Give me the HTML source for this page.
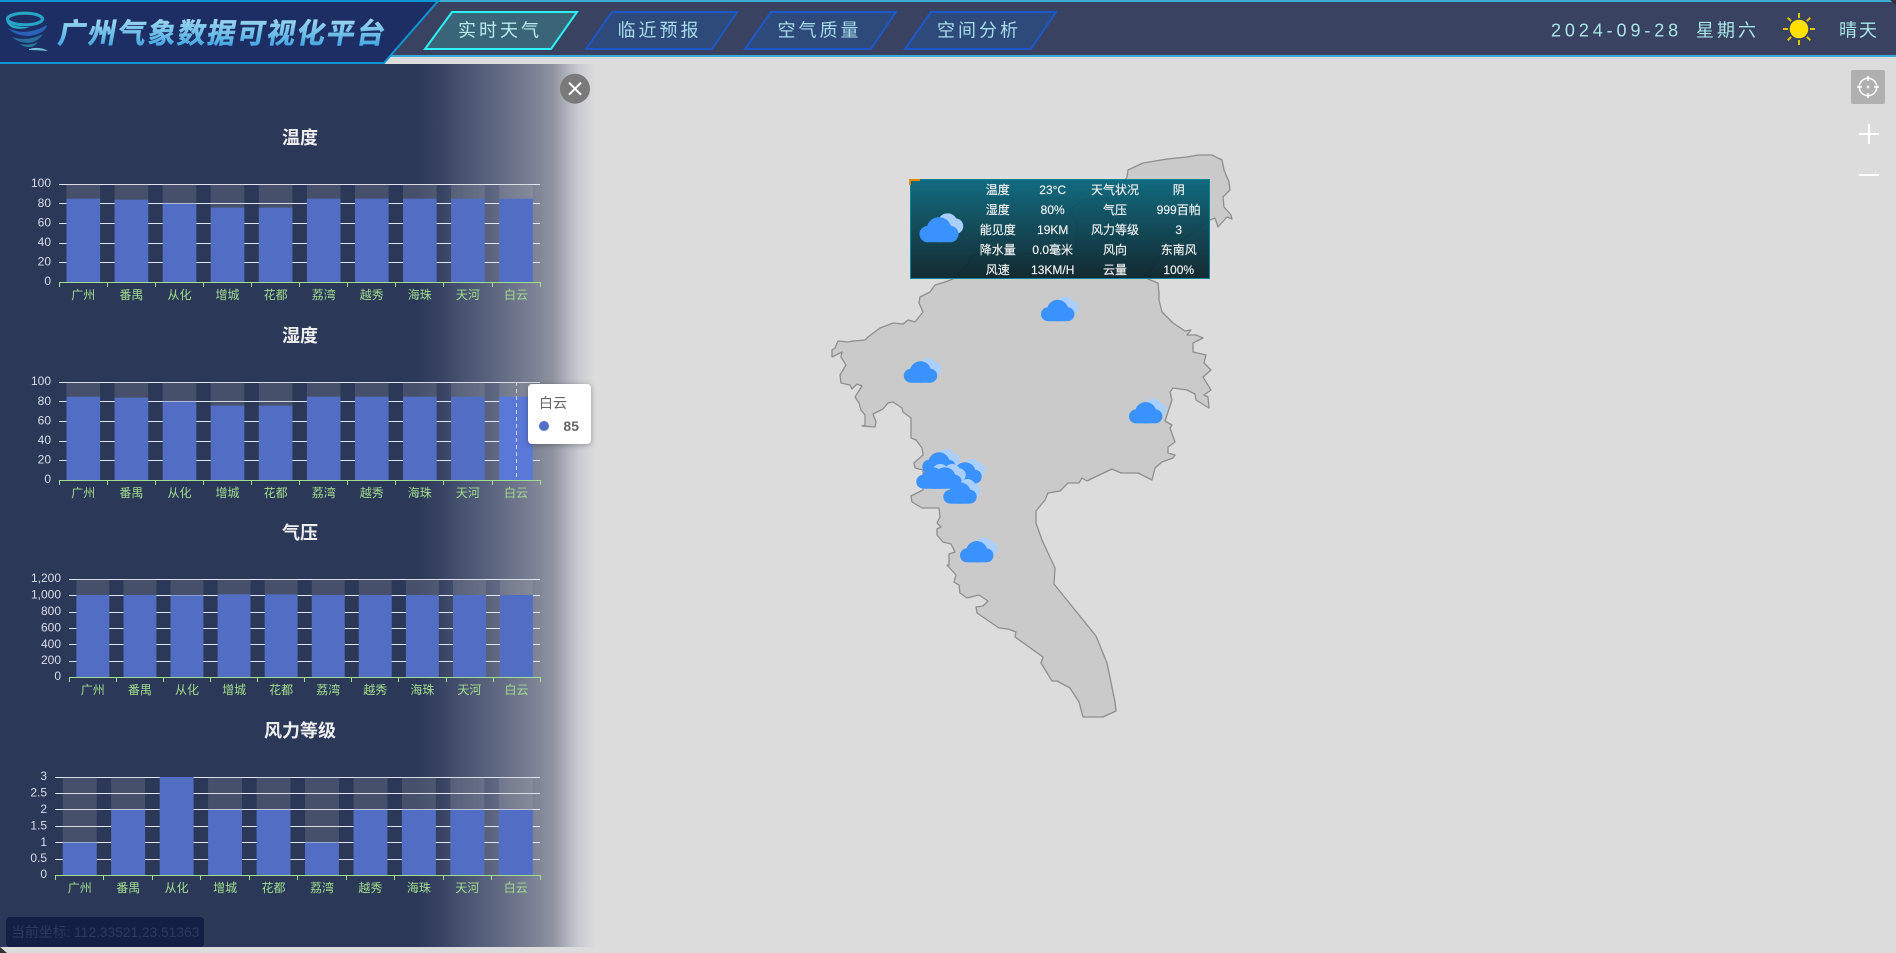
<!DOCTYPE html>
<html lang="zh">
<head>
<meta charset="utf-8">
<title>广州气象数据可视化平台</title>
<style>
html,body{margin:0;padding:0;width:1896px;height:953px;overflow:hidden;background:#dcdcdc;}
body{position:relative;font-family:"Liberation Sans","Noto Sans CJK SC",sans-serif;}
svg.main{position:absolute;left:0;top:0;font-family:"Liberation Sans","Noto Sans CJK SC",sans-serif;}
.tip{position:absolute;left:528px;top:384px;width:63px;height:60px;background:#fff;border-radius:4px;box-shadow:0 1px 6px rgba(0,0,0,.3);color:#666;font-size:14px;}
.tip .n{position:absolute;left:11px;top:9px;line-height:20px;}
.tip .d{position:absolute;left:11px;top:37px;width:10px;height:10px;border-radius:50%;background:#5470c6;}
.tip .v{position:absolute;right:12px;top:32px;line-height:20px;font-weight:700;}
.coord{position:absolute;left:6px;top:917px;width:198px;height:30px;background:#141f45;border-radius:4px;color:#2e3a5c;font-size:14px;line-height:30px;padding-left:5px;box-sizing:border-box;white-space:nowrap;letter-spacing:-.12px;}
</style>
</head>
<body>
<svg class="main" width="1896" height="953" viewBox="0 0 1896 953">
<defs>
<linearGradient id="pg" gradientUnits="userSpaceOnUse" x1="0" y1="0" x2="600" y2="0">
<stop offset="0" stop-color="#2b3858"/><stop offset=".695" stop-color="#2b3858"/>
<stop offset=".733" stop-color="#384363"/><stop offset=".778" stop-color="#4a5572"/>
<stop offset=".833" stop-color="#616983"/><stop offset=".888" stop-color="#7b8194"/>
<stop offset=".922" stop-color="#90949f"/><stop offset=".945" stop-color="#b0b3bd"/>
<stop offset=".967" stop-color="#cccdd2"/><stop offset=".993" stop-color="#dcdcdc"/>
</linearGradient>
<linearGradient id="pop" x1="0" y1="0" x2="0" y2="1">
<stop offset="0" stop-color="#07657b" stop-opacity=".95"/><stop offset="1" stop-color="#0a2128" stop-opacity=".95"/>
</linearGradient>
<linearGradient id="tt" x1="0" y1="0" x2="0" y2="1">
<stop offset="0" stop-color="#b4e2f4"/><stop offset=".55" stop-color="#6fbfe8"/><stop offset="1" stop-color="#2f9ae0"/>
</linearGradient>
<symbol id="cloud" overflow="visible" viewBox="-20 -20 40 40" width="40" height="40">
<circle cx="7.3" cy="-5.7" r="8.3" fill="#a9cfff"/><circle cx="14" cy="-3" r="6.7" fill="#a9cfff"/>
<circle cx="0" cy="0" r="10.7" fill="#3a92ff"/><rect x="-16.7" y="-3.3" width="33.4" height="14" rx="7" fill="#3a92ff"/>
</symbol>
</defs>

<!-- map -->
<path fill="#cacaca" stroke="#8e8e8e" stroke-width="1.3" stroke-linejoin="round" d="M1127 177 L1128 170 1143 163 1167 159 1187 157 1198 155 1212 155 1222 160 1224 170 1229 182 1230 190 1223 197 1224 207 1231 215 1232 219 1227 217 1218 227 1215 218 1210 220 1187 237 1165 250 1150 272 1148 279 1158 283 1159 293 1159 300 1162 312 1173 323 1185 331 1191 330 1187 335 1196 335 1203 338 1193 343 1193 352 1206 355 1204 363 1211 370 1203 377 1211 390 1204 395 1208 397 1209 408 1196 400 1195 394 1187 390 1173 388 1170 392 1172 400 1165 421 1172 425 1170 428 1175 442 1168 447 1168 453 1175 455 1173 458 1162 462 1155 468 1152 480 1138 473 1121 473 1112 469 1093 478 1087 481 1082 478 1079 483 1068 483 1060 491 1048 493 1045 500 1036 511 1036 523 1042 540 1055 568 1054 584 1096 636 1107 663 1115 702 1116 711 1103 717 1083 717 1079 702 1070 688 1057 681 1052 681 1041 663 1043 657 1015 637 1016 632 1008 629 999 628 977 613 976 607 983 606 988 601 979 595 967 598 960 593 959 585 954 582 956 575 947 565 949 565 949 554 955 552 951 544 943 542 937 535 937 529 941 527 937 523 940 517 939 508 922 508 912 502 911 496 923 490 923 470 915 468 914 463 923 455 922 448 916 440 911 438 911 418 903 412 902 408 893 402 888 403 883 409 873 414 876 422 875 427 862 426 865 425 865 415 861 410 859 403 855 397 862 386 857 384 852 389 850 385 841 383 840 375 846 365 841 357 842 352 832 357 832 350 835 348 838 341 848 342 853 341 865 340 868 337 880 328 888 325 893 323 903 324 908 320 915 322 923 312 919 303 920 297 930 292 935 285 945 282 953 279 965 268 972 255 1000 252 1040 254 1075 255 1077 225 1070 210 1083 200 1113 197 1127 177 Z"/>

<!-- clouds -->
<use href="#cloud" x="1037.7" y="290.5"/>
<use href="#cloud" x="900.5" y="352"/>
<use href="#cloud" x="1125.7" y="392.7"/>
<use href="#cloud" x="956.7" y="531.7"/>
<use href="#cloud" x="919" y="443"/>
<use href="#cloud" x="945" y="453"/>
<use href="#cloud" x="913" y="458"/>
<use href="#cloud" x="925" y="458"/>
<use href="#cloud" x="940" y="473"/>

<!-- popup -->
<rect x="910.5" y="179.5" width="299" height="99" fill="url(#pop)" stroke="#0e8499"/>
<path d="M910 185V180H920" fill="none" stroke="#e08a00" stroke-width="2"/>
<g transform="translate(939 229.7) scale(1.17) translate(-20 -20)"><use href="#cloud" x="0" y="0"/></g>
<g font-size="12" fill="#f2f2f2" stroke="#f2f2f2" stroke-width=".15" text-anchor="middle">
<text x="997.7" y="194">温度</text><text x="1052.7" y="194">23°C</text><text x="1115" y="194">天气状况</text><text x="1178.7" y="194">阴</text>
<text x="997.7" y="214">湿度</text><text x="1052.7" y="214">80%</text><text x="1115" y="214">气压</text><text x="1178.7" y="214">999百帕</text>
<text x="997.7" y="234">能见度</text><text x="1052.7" y="234">19KM</text><text x="1115" y="234">风力等级</text><text x="1178.7" y="234">3</text>
<text x="997.7" y="254">降水量</text><text x="1052.7" y="254">0.0毫米</text><text x="1115" y="254">风向</text><text x="1178.7" y="254">东南风</text>
<text x="997.7" y="274">风速</text><text x="1052.7" y="274">13KM/H</text><text x="1115" y="274">云量</text><text x="1178.7" y="274">100%</text>
</g>

<!-- map controls -->
<rect x="1851" y="70" width="34" height="34" rx="2" fill="#b0b0b0"/>
<g fill="none" stroke="#fff" stroke-width="1.5">
<circle cx="1868" cy="87" r="8.7"/>
<path d="M1868 76v5M1868 93v5M1857 87h5M1874 87h5"/>
<path d="M1866.5 87h3M1868 85.5v3" stroke-width="1"/>
</g>
<path d="M1869 124v20M1859 134h20M1859 175h20" stroke="#fff" stroke-width="2" fill="none"/>

<!-- panel -->
<rect x="0" y="64" width="600" height="883" fill="url(#pg)"/>
<circle cx="575" cy="88.7" r="15" fill="#7a7a7a"/>
<path d="M569 82.7l12 12M581 82.7l-12 12" stroke="#fff" stroke-width="2" fill="none"/>

<!-- header -->
<rect x="0" y="0" width="1896" height="57" fill="#394260"/>
<rect x="0" y="0" width="1896" height="2" fill="#3aacd6"/>
<rect x="0" y="55" width="1896" height="2" fill="#3aacd6"/>
<path d="M-3 1H438L384 63H-3Z" fill="#1d2e64" stroke="#0e95d4" stroke-width="2"/>
<rect x="0" y="0" width="440" height="1.5" fill="#0e95d4"/>

<!-- logo -->
<ellipse cx="25" cy="19" rx="17.5" ry="5.8" fill="none" stroke="#27a4c4" stroke-width="3.2"/>
<path d="M6 20Q12 28 30 27Q22 30 13 28Q7 25 6 20Z" fill="#27b0c8"/>
<path d="M8 28Q26 37 47 25Q46 33 30 36Q15 36 8 28Z" fill="#2a62b8"/>
<path d="M12 37Q28 42 43 34Q38 42 28 43Q17 42 12 37Z" fill="#2b6f9c"/>
<path d="M20 44Q30 46 38 42Q34 48 27 47Q22 46 20 44Z" fill="#2b7a98"/>
<path d="M29 49Q40 46 48 51Q38 50 29 50Z" fill="#6fc0d8"/>

<!-- title -->
<text transform="translate(57 43) skewX(-10)" font-size="28" font-weight="700" letter-spacing="1.85" fill="url(#tt)" stroke="url(#tt)" stroke-width=".5" font-family="'Noto Sans CJK SC',sans-serif">广州气象数据可视化平台</text>

<!-- tabs -->
<path d="M452 12H577L551 49H425Z" fill="#3a6478" stroke="#2ef0f2" stroke-width="2"/>
<path d="M612 12H737L712 49H586Z" fill="#2e4a7a" stroke="#1c58c8" stroke-width="2"/>
<path d="M771 12H896L871 49H745Z" fill="#2e4a7a" stroke="#1c58c8" stroke-width="2"/>
<path d="M931 12H1056L1031 49H905Z" fill="#2e4a7a" stroke="#1c58c8" stroke-width="2"/>
<g font-size="18" letter-spacing="3" text-anchor="middle" font-family="'Noto Sans CJK SC',sans-serif">
<text x="500" y="36.5" fill="#b8ecec">实时天气</text>
<text x="659.5" y="36.5" fill="#a8dcea">临近预报</text>
<text x="819.5" y="36.5" fill="#a8dcea">空气质量</text>
<text x="979" y="36.5" fill="#a8dcea">空间分析</text>
</g>

<!-- date / weather -->
<text x="1551" y="36.5" font-size="18" letter-spacing="3.9" fill="#a8e6e8">2024-09-28</text>
<text x="1696" y="36.5" font-size="18" letter-spacing="3" fill="#a8e6e8">星期六</text>
<circle cx="1799" cy="29" r="9.3" fill="#ffe000"/>
<path d="M1799 13v5M1799 40v5M1783 29h5M1810 29h5M1787.7 17.7l3.5 3.5M1806.8 36.8l3.5 3.5M1810.3 17.7l-3.5 3.5M1791.2 36.8l-3.5 3.5" stroke="#e2c400" stroke-width="2" fill="none"/>
<text x="1839" y="36.5" font-size="18" letter-spacing="2" fill="#a8e6e8">晴天</text>

<!-- corners -->
<path d="M0 947L7 953H0Z" fill="#333"/>
<path d="M1890 0H1896V5Z" fill="#333"/>

<!-- chart 1 -->
<g transform="translate(0 184)">
<text x="300" y="-40" font-size="18" font-weight="700" fill="#eeeeee" text-anchor="middle">温度</text>
<g stroke="#e0e6f1" shape-rendering="crispEdges"><path d="M59 0.5H540M59 19.5H540M59 39.5H540M59 59.5H540M59 78.5H540"/></g>
<g fill="#b4b4b4" fill-opacity=".2"><rect x="66.5" y="0" width="33.6" height="98"/><rect x="114.6" y="0" width="33.6" height="98"/><rect x="162.7" y="0" width="33.6" height="98"/><rect x="210.7" y="0" width="33.6" height="98"/><rect x="258.8" y="0" width="33.6" height="98"/><rect x="306.9" y="0" width="33.6" height="98"/><rect x="355" y="0" width="33.6" height="98"/><rect x="403" y="0" width="33.6" height="98"/><rect x="451.1" y="0" width="33.6" height="98"/><rect x="499.2" y="0" width="33.6" height="98"/></g>
<g fill="#516ec4"><rect x="66.5" y="14.7" width="33.6" height="83.6"/><rect x="114.6" y="15.7" width="33.6" height="82.6"/><rect x="162.7" y="19.7" width="33.6" height="78.6"/><rect x="210.7" y="23.6" width="33.6" height="74.7"/><rect x="258.8" y="23.6" width="33.6" height="74.7"/><rect x="306.9" y="14.7" width="33.6" height="83.6"/><rect x="355" y="14.7" width="33.6" height="83.6"/><rect x="403" y="14.7" width="33.6" height="83.6"/><rect x="451.1" y="14.7" width="33.6" height="83.6"/><rect x="499.2" y="14.7" width="33.6" height="83.6"/></g>
<path d="M59 98.5H540M59.5 98v5M107.5 98v5M155.5 98v5M203.5 98v5M251.5 98v5M299.5 98v5M347.5 98v5M395.5 98v5M443.5 98v5M492.5 98v5M540.5 98v5" stroke="#a2dc8e" fill="none" shape-rendering="crispEdges"/>
<g font-size="12" fill="#d8dde8" text-anchor="end"><text x="51" y="3">100</text><text x="51" y="23">80</text><text x="51" y="42.5">60</text><text x="51" y="62">40</text><text x="51" y="81.5">20</text><text x="51" y="101">0</text></g>
<g font-size="12" fill="#a2dc8e" text-anchor="middle"><text x="83.3" y="115">广州</text><text x="131.4" y="115">番禺</text><text x="179.5" y="115">从化</text><text x="227.5" y="115">增城</text><text x="275.6" y="115">花都</text><text x="323.7" y="115">荔湾</text><text x="371.8" y="115">越秀</text><text x="419.8" y="115">海珠</text><text x="467.9" y="115">天河</text><text x="516" y="115">白云</text></g>
</g>

<!-- chart 2 -->
<g transform="translate(0 382)">
<text x="300" y="-40" font-size="18" font-weight="700" fill="#eeeeee" text-anchor="middle">湿度</text>
<g stroke="#e0e6f1" shape-rendering="crispEdges"><path d="M59 0.5H540M59 19.5H540M59 39.5H540M59 59.5H540M59 78.5H540"/></g>
<g fill="#b4b4b4" fill-opacity=".2"><rect x="66.5" y="0" width="33.6" height="98"/><rect x="114.6" y="0" width="33.6" height="98"/><rect x="162.7" y="0" width="33.6" height="98"/><rect x="210.7" y="0" width="33.6" height="98"/><rect x="258.8" y="0" width="33.6" height="98"/><rect x="306.9" y="0" width="33.6" height="98"/><rect x="355" y="0" width="33.6" height="98"/><rect x="403" y="0" width="33.6" height="98"/><rect x="451.1" y="0" width="33.6" height="98"/><rect x="499.2" y="0" width="33.6" height="98"/></g>
<g fill="#516ec4"><rect x="66.5" y="14.7" width="33.6" height="83.6"/><rect x="114.6" y="15.7" width="33.6" height="82.6"/><rect x="162.7" y="19.7" width="33.6" height="78.6"/><rect x="210.7" y="23.6" width="33.6" height="74.7"/><rect x="258.8" y="23.6" width="33.6" height="74.7"/><rect x="306.9" y="14.7" width="33.6" height="83.6"/><rect x="355" y="14.7" width="33.6" height="83.6"/><rect x="403" y="14.7" width="33.6" height="83.6"/><rect x="451.1" y="14.7" width="33.6" height="83.6"/></g>
<rect x="499.2" y="14.7" width="33.6" height="83.6" fill="#5a78d8"/>
<path d="M516.5 0V98" stroke="#cfd3dc" stroke-dasharray="4 3" fill="none" shape-rendering="crispEdges"/>
<path d="M59 98.5H540M59.5 98v5M107.5 98v5M155.5 98v5M203.5 98v5M251.5 98v5M299.5 98v5M347.5 98v5M395.5 98v5M443.5 98v5M492.5 98v5M540.5 98v5" stroke="#a2dc8e" fill="none" shape-rendering="crispEdges"/>
<g font-size="12" fill="#d8dde8" text-anchor="end"><text x="51" y="3">100</text><text x="51" y="23">80</text><text x="51" y="42.5">60</text><text x="51" y="62">40</text><text x="51" y="81.5">20</text><text x="51" y="101">0</text></g>
<g font-size="12" fill="#a2dc8e" text-anchor="middle"><text x="83.3" y="115">广州</text><text x="131.4" y="115">番禺</text><text x="179.5" y="115">从化</text><text x="227.5" y="115">增城</text><text x="275.6" y="115">花都</text><text x="323.7" y="115">荔湾</text><text x="371.8" y="115">越秀</text><text x="419.8" y="115">海珠</text><text x="467.9" y="115">天河</text><text x="516" y="115">白云</text></g>
</g>

<!-- chart 3 -->
<g transform="translate(0 579)">
<text x="300" y="-40" font-size="18" font-weight="700" fill="#eeeeee" text-anchor="middle">气压</text>
<g stroke="#e0e6f1" shape-rendering="crispEdges"><path d="M69 0.5H540M69 16.5H540M69 33.5H540M69 49.5H540M69 65.5H540M69 82.5H540"/></g>
<g fill="#b4b4b4" fill-opacity=".2"><rect x="76.4" y="0" width="32.9" height="98"/><rect x="123.5" y="0" width="32.9" height="98"/><rect x="170.5" y="0" width="32.9" height="98"/><rect x="217.6" y="0" width="32.9" height="98"/><rect x="264.7" y="0" width="32.9" height="98"/><rect x="311.8" y="0" width="32.9" height="98"/><rect x="358.8" y="0" width="32.9" height="98"/><rect x="405.9" y="0" width="32.9" height="98"/><rect x="453" y="0" width="32.9" height="98"/><rect x="500" y="0" width="32.9" height="98"/></g>
<g fill="#516ec4"><rect x="76.4" y="16" width="32.9" height="82.3"/><rect x="123.5" y="16" width="32.9" height="82.3"/><rect x="170.5" y="16.4" width="32.9" height="81.9"/><rect x="217.6" y="15.3" width="32.9" height="83"/><rect x="264.7" y="15.4" width="32.9" height="82.9"/><rect x="311.8" y="16" width="32.9" height="82.3"/><rect x="358.8" y="16" width="32.9" height="82.3"/><rect x="405.9" y="16" width="32.9" height="82.3"/><rect x="453" y="16" width="32.9" height="82.3"/><rect x="500" y="16" width="32.9" height="82.3"/></g>
<path d="M69 98.5H540M69.5 98v5M116.5 98v5M163.5 98v5M210.5 98v5M257.5 98v5M304.5 98v5M351.5 98v5M398.5 98v5M446.5 98v5M493.5 98v5M540.5 98v5" stroke="#a2dc8e" fill="none" shape-rendering="crispEdges"/>
<g font-size="12" fill="#d8dde8" text-anchor="end"><text x="61" y="3">1,200</text><text x="61" y="19.5">1,000</text><text x="61" y="36">800</text><text x="61" y="52.5">600</text><text x="61" y="69">400</text><text x="61" y="85">200</text><text x="61" y="101">0</text></g>
<g font-size="12" fill="#a2dc8e" text-anchor="middle"><text x="92.8" y="115">广州</text><text x="139.9" y="115">番禺</text><text x="187" y="115">从化</text><text x="234.1" y="115">增城</text><text x="281.1" y="115">花都</text><text x="328.2" y="115">荔湾</text><text x="375.3" y="115">越秀</text><text x="422.4" y="115">海珠</text><text x="469.4" y="115">天河</text><text x="516.5" y="115">白云</text></g>
</g>

<!-- chart 4 -->
<g transform="translate(0 777)">
<text x="300" y="-40" font-size="18" font-weight="700" fill="#eeeeee" text-anchor="middle">风力等级</text>
<g stroke="#e0e6f1" shape-rendering="crispEdges"><path d="M55 0.5H540M55 16.5H540M55 32.5H540M55 49.5H540M55 65.5H540M55 82.5H540"/></g>
<g fill="#b4b4b4" fill-opacity=".2"><rect x="62.8" y="0" width="33.9" height="98"/><rect x="111.2" y="0" width="33.9" height="98"/><rect x="208.1" y="0" width="33.9" height="98"/><rect x="256.6" y="0" width="33.9" height="98"/><rect x="305" y="0" width="33.9" height="98"/><rect x="353.5" y="0" width="33.9" height="98"/><rect x="401.9" y="0" width="33.9" height="98"/><rect x="450.4" y="0" width="33.9" height="98"/><rect x="498.8" y="0" width="33.9" height="98"/></g>
<g fill="#516ec4"><rect x="62.8" y="65.5" width="33.9" height="32.8"/><rect x="111.2" y="32.8" width="33.9" height="65.5"/><rect x="159.7" y="0" width="33.9" height="98.3"/><rect x="208.1" y="32.8" width="33.9" height="65.5"/><rect x="256.6" y="32.8" width="33.9" height="65.5"/><rect x="305" y="65.5" width="33.9" height="32.8"/><rect x="353.5" y="32.8" width="33.9" height="65.5"/><rect x="401.9" y="32.8" width="33.9" height="65.5"/><rect x="450.4" y="32.8" width="33.9" height="65.5"/><rect x="498.8" y="32.8" width="33.9" height="65.5"/></g>
<path d="M55 98.5H540M55.5 98v5M103.5 98v5M152.5 98v5M200.5 98v5M249.5 98v5M297.5 98v5M346.5 98v5M394.5 98v5M443.5 98v5M491.5 98v5M540.5 98v5" stroke="#a2dc8e" fill="none" shape-rendering="crispEdges"/>
<g font-size="12" fill="#d8dde8" text-anchor="end"><text x="47" y="3">3</text><text x="47" y="19.5">2.5</text><text x="47" y="36">2</text><text x="47" y="52.5">1.5</text><text x="47" y="69">1</text><text x="47" y="85">0.5</text><text x="47" y="101">0</text></g>
<g font-size="12" fill="#a2dc8e" text-anchor="middle"><text x="79.7" y="115">广州</text><text x="128.2" y="115">番禺</text><text x="176.6" y="115">从化</text><text x="225.1" y="115">增城</text><text x="273.5" y="115">花都</text><text x="322" y="115">荔湾</text><text x="370.4" y="115">越秀</text><text x="418.9" y="115">海珠</text><text x="467.3" y="115">天河</text><text x="515.8" y="115">白云</text></g>
</g>
</svg>

<div class="tip"><div class="n">白云</div><div class="d"></div><div class="v">85</div></div>
<div class="coord">当前坐标: 112.33521,23.51363</div>
</body>
</html>
